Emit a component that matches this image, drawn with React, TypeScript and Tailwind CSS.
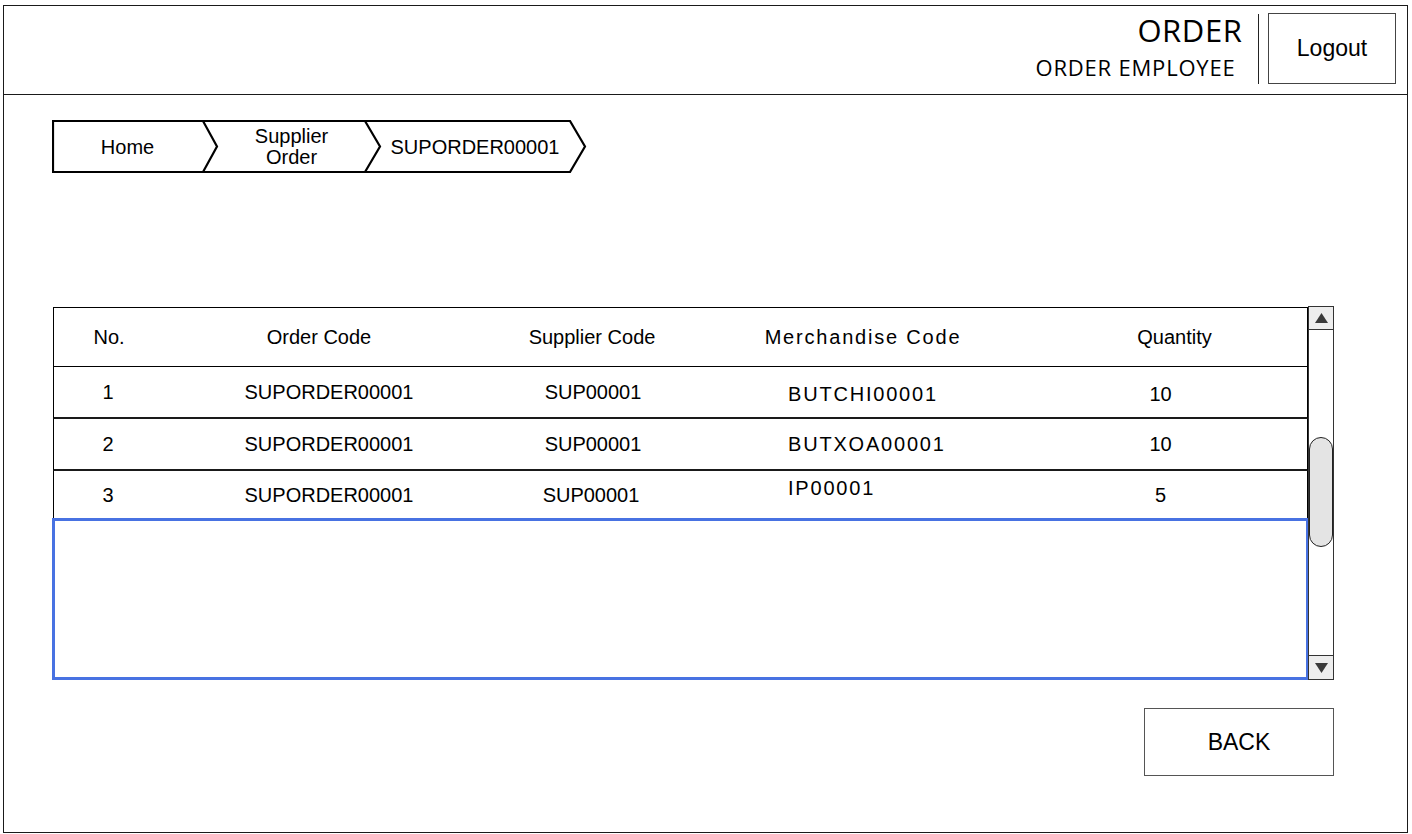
import React from "react";

interface OrderLine {
  no: string;
  orderCode: string;
  supplierCode: string;
  merchandiseCode: string;
  quantity: string;
}

const lines: OrderLine[] = [
  { no: "1", orderCode: "SUPORDER00001", supplierCode: "SUP00001", merchandiseCode: "BUTCHI00001", quantity: "10" },
  { no: "2", orderCode: "SUPORDER00001", supplierCode: "SUP00001", merchandiseCode: "BUTXOA00001", quantity: "10" },
  { no: "3", orderCode: "SUPORDER00001", supplierCode: "SUP00001", merchandiseCode: "IP00001", quantity: "5" },
];

const sans = "font-['Liberation_Sans',Arial,sans-serif]";

function Breadcrumb() {
  return (
    <div className="relative w-[535px] h-[53px]">
      <svg className="absolute inset-0" width="535" height="53" viewBox="0 0 535 53" fill="none">
        <path
          d="M1 1 H518 L533 26.5 L518 52 H1 Z M151 1 L165 26.5 L151 52 M313 1 L328 26.5 L313 52"
          stroke="#000"
          strokeWidth="2.2"
          strokeLinejoin="miter"
        />
      </svg>
      <div className={`relative flex h-full items-center text-[20px] text-black ${sans}`}>
        <span className="w-[151px] text-center">Home</span>
        <span className="w-[177px] text-center leading-[21px]">
          Supplier
          <br />
          Order
        </span>
        <span className="w-[190px] text-center">SUPORDER00001</span>
      </div>
    </div>
  );
}

function Scrollbar() {
  return (
    <div className="flex flex-col w-[26px] h-[374px] border border-[#333] bg-white">
      <div className="h-[23px] flex items-center justify-center bg-[#ededed] border-b border-[#333]">
        <svg width="13" height="10" viewBox="0 0 13 10">
          <polygon points="6.5,0 13,10 0,10" fill="#3a3a3a" />
        </svg>
      </div>
      <div className="flex-1 flex flex-col">
        <div className="mt-[107px] h-[110px] rounded-full bg-[#e4e4e4] border border-[#222]" />
      </div>
      <div className="h-[24px] flex items-center justify-center bg-[#ededed] border-t border-[#333]">
        <svg width="13" height="10" viewBox="0 0 13 10">
          <polygon points="0,0 13,0 6.5,10" fill="#3a3a3a" />
        </svg>
      </div>
    </div>
  );
}

function OrderTable() {
  return (
    <div className="flex w-[1282px]">
      <div className="flex flex-col w-[1256px] mt-[1px]">
        <div className={`ml-[1px] h-[60px] flex items-center border border-black text-[20px] text-black ${sans}`}>
          <div className="w-[110px] text-center">No.</div>
          <div className="w-[320px] text-center pr-[10px]">Order Code</div>
          <div className="w-[218px] text-center pr-[2px]">Supplier Code</div>
          <div className="w-[322px] text-center tracking-[1.8px]">Merchandise Code</div>
          <div className="flex-1 text-center pl-[18px]">Quantity</div>
        </div>
        {lines.map((line, i) => (
          <div
            key={i}
            className={`ml-[1px] flex items-center border-x border-black text-[20px] text-black ${sans} ${
              i < lines.length - 1 ? "h-[52px] border-b-[2.5px] border-b-[#1a1a1a]" : "h-[47px]"
            }`}
          >
            <div className="w-[110px] text-center pr-[2px]">{line.no}</div>
            <div className="w-[320px] text-center pl-[10px]">{line.orderCode}</div>
            <div className={`w-[218px] text-center ${i === 2 ? "pr-[4px]" : ""}`}>{line.supplierCode}</div>
            <div
              className={`w-[322px] pl-[86px] tracking-[1.8px] ${
                i === 2 ? "-translate-y-[7px]" : i === 0 ? "translate-y-[2px]" : ""
              }`}
            >
              {line.merchandiseCode}
            </div>
            <div className={`flex-1 text-center pr-[10px] ${i === 0 ? "translate-y-[2px]" : ""}`}>
              {line.quantity}
            </div>
          </div>
        ))}
        <div className="h-[162px] w-[1257px] border-[3px] border-[#4872e2]" />
      </div>
      <Scrollbar />
    </div>
  );
}

export default function App() {
  return (
    <div className="w-[1412px] h-[834px] bg-white pt-[5px] pl-[3px] pr-[4px] pb-[1px]">
      <div className="h-full flex flex-col border border-[#1a1a1a]">
        <header className="h-[89px] shrink-0 flex justify-end border-b border-[#1a1a1a] pr-[11px]">
          <div className="mt-[9px] flex flex-col items-end text-black font-['Open_Sans','Noto_Sans',sans-serif]">
            <span className="text-[31px] leading-[30px] tracking-[0.6px]">ORDER</span>
            <span className="mt-[11px] pr-[7px] text-[22px] leading-[22px] tracking-[0.8px]">ORDER EMPLOYEE</span>
          </div>
          <div className="ml-[15px] mt-[8px] w-[1.5px] h-[70px] bg-[#222]" />
          <button
            className={`ml-[9px] mt-[7px] w-[128px] h-[71px] border border-[#444] bg-white text-[23px] text-black ${sans}`}
          >
            Logout
          </button>
        </header>
        <main className="flex flex-col pl-[48px] pt-[25px]">
          <Breadcrumb />
          <div className="mt-[133px]">
            <OrderTable />
          </div>
          <div className="w-[1282px] flex justify-end mt-[28px]">
            <button
              className={`w-[190px] h-[68px] border border-[#555] bg-white text-[23px] text-black ${sans}`}
            >
              BACK
            </button>
          </div>
        </main>
      </div>
    </div>
  );
}
